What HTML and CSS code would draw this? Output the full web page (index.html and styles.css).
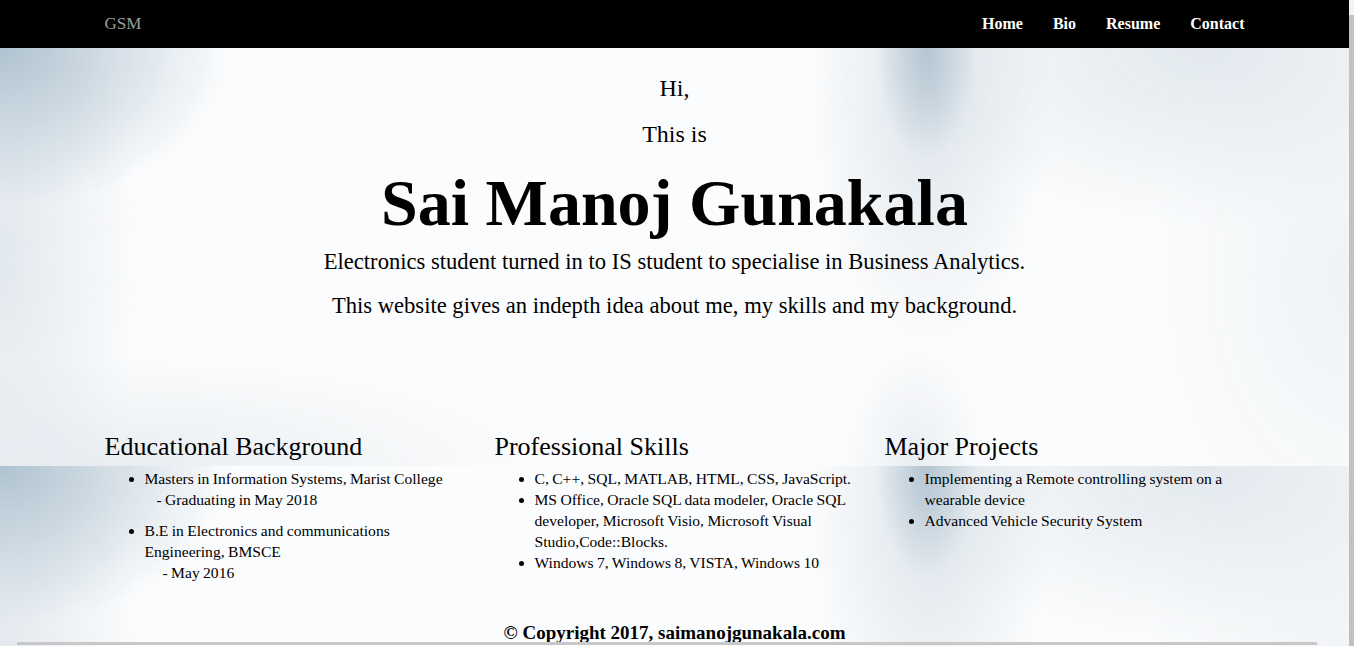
FILE: index.html
```html
<!DOCTYPE html>
<html lang="en">
<head>
<meta charset="utf-8">
<title>Sai Manoj Gunakala</title>
<link rel="stylesheet" href="styles.css">
</head>
<body>
<div class="page">
  <nav class="navbar">
    <div class="container nav-inner">
      <a class="brand" href="#">GSM</a>
      <ul class="nav-links">
        <li><a href="#">Home</a></li>
        <li><a href="#">Bio</a></li>
        <li><a href="#">Resume</a></li>
        <li><a href="#">Contact</a></li>
      </ul>
    </div>
  </nav>

  <section class="hero">
    <h3 class="greet">Hi,</h3>
    <h3 class="greet">This is</h3>
    <h1 class="name">Sai Manoj Gunakala</h1>
    <p class="lead">Electronics student turned in to IS student to specialise in Business Analytics.</p>
    <p class="lead">This website gives an indepth idea about me, my skills and my background.</p>
  </section>

  <section class="container cols">
    <div class="col">
      <h2>Educational Background</h2>
      <ul>
        <li class="spaced">Masters in Information Systems, Marist College<br><span class="sub">- Graduating in May 2018</span></li>
        <li>B.E in Electronics and communications Engineering, BMSCE<br><span class="sub sub2">- May 2016</span></li>
      </ul>
    </div>
    <div class="col">
      <h2>Professional Skills</h2>
      <ul>
        <li>C, C++, SQL, MATLAB, HTML, CSS, JavaScript.</li>
        <li>MS Office, Oracle SQL data modeler, Oracle SQL developer, Microsoft Visio, Microsoft Visual Studio,Code::Blocks.</li>
        <li>Windows 7, Windows 8, VISTA, Windows 10</li>
      </ul>
    </div>
    <div class="col">
      <h2>Major Projects</h2>
      <ul>
        <li>Implementing a Remote controlling system on a wearable device</li>
        <li>Advanced Vehicle Security System</li>
      </ul>
    </div>
  </section>

  <footer class="footer">© Copyright 2017, saimanojgunakala.com</footer>
</div>
<div class="vscroll"><div class="vthumb"></div></div>
<div class="hscroll"></div>
</body>
</html>
```
FILE: styles.css
```css
* { box-sizing: border-box; }
html, body { margin: 0; padding: 0; }
body {
  font-family: "Liberation Serif", "Times New Roman", serif;
  color: #000;
  background-color: #fbfcfd;
  background-image:
    radial-gradient(ellipse 50px 110px at 926px 0, rgba(165,186,201,0.75), rgba(165,186,201,0) 100%),
    radial-gradient(ellipse 120px 260px at 930px 40px, rgba(190,204,215,0.5), rgba(190,204,215,0) 100%),
    radial-gradient(ellipse 230px 160px at 0 0, rgba(172,192,206,0.95), rgba(172,192,206,0) 100%),
    radial-gradient(ellipse 140px 330px at 0 50%, rgba(205,216,225,0.55), rgba(205,216,225,0) 100%),
    radial-gradient(ellipse 420px 110px at 120px 100%, rgba(215,224,231,0.5), rgba(215,224,231,0) 100%),
    radial-gradient(ellipse 70px 120px at 915px 100%, rgba(200,212,222,0.35), rgba(200,212,222,0) 100%),
    radial-gradient(ellipse 300px 180px at 1200px 0, rgba(215,224,231,0.7), rgba(215,224,231,0) 100%),
    radial-gradient(ellipse 200px 300px at 1349px 55%, rgba(228,234,239,0.5), rgba(228,234,239,0) 100%);
  background-size: 1349px 418px;
  background-position: 0 48px;
  background-repeat: repeat;
}
.page { width: 1349px; min-height: 700px; }
.container { width: 1170px; margin: 0 auto; padding: 0 15px; }

.navbar { background: #000; height: 48px; }
.nav-inner { display: flex; align-items: center; justify-content: space-between; height: 48px; }
.brand { color: #9d9d9d; text-decoration: none; font-size: 17px; line-height: 20px; }
.nav-links { list-style: none; margin: 0 -15px 0 0; padding: 0; display: flex; }
.nav-links a { display: block; padding: 0 15px; color: #fff; text-decoration: none; font-weight: bold; font-size: 16px; line-height: 42px; }

.hero { text-align: center; padding-top: 25px; }
.greet { font-weight: normal; font-size: 24px; line-height: 30px; margin: 0 0 16px; }
.name { font-size: 66px; font-weight: bold; line-height: 76px; margin: 0 0 7px; }
.lead { font-size: 22.6px; line-height: 28px; margin: 0 0 16px; }

.cols { display: grid; grid-template-columns: repeat(3, 1fr); margin-top: 111px; padding: 0; width: 1170px; }
.col { padding: 0 15px; }
.col h2 { font-weight: normal; font-size: 26px; line-height: 32px; margin: 0 0 5px; }
.col ul { margin: 0; padding-left: 40px; font-size: 15.6px; line-height: 21px; word-spacing: -0.5px; }
.col li.spaced { margin-bottom: 10px; }
.sub { padding-left: 12px; }
.sub2 { padding-left: 18px; }

.footer { text-align: center; font-weight: bold; font-size: 19px; line-height: 22px; margin-top: 39px; }

.vscroll { position: fixed; top: 0; right: 0; width: 5px; height: 100%; background: #f3f3f3; }
.vthumb { margin-top: 15px; height: 640px; background: #c1c1c1; }
.hscroll { position: fixed; left: 17px; bottom: 1px; width: 1300px; height: 3px; background: #c8c8c8; }
```
